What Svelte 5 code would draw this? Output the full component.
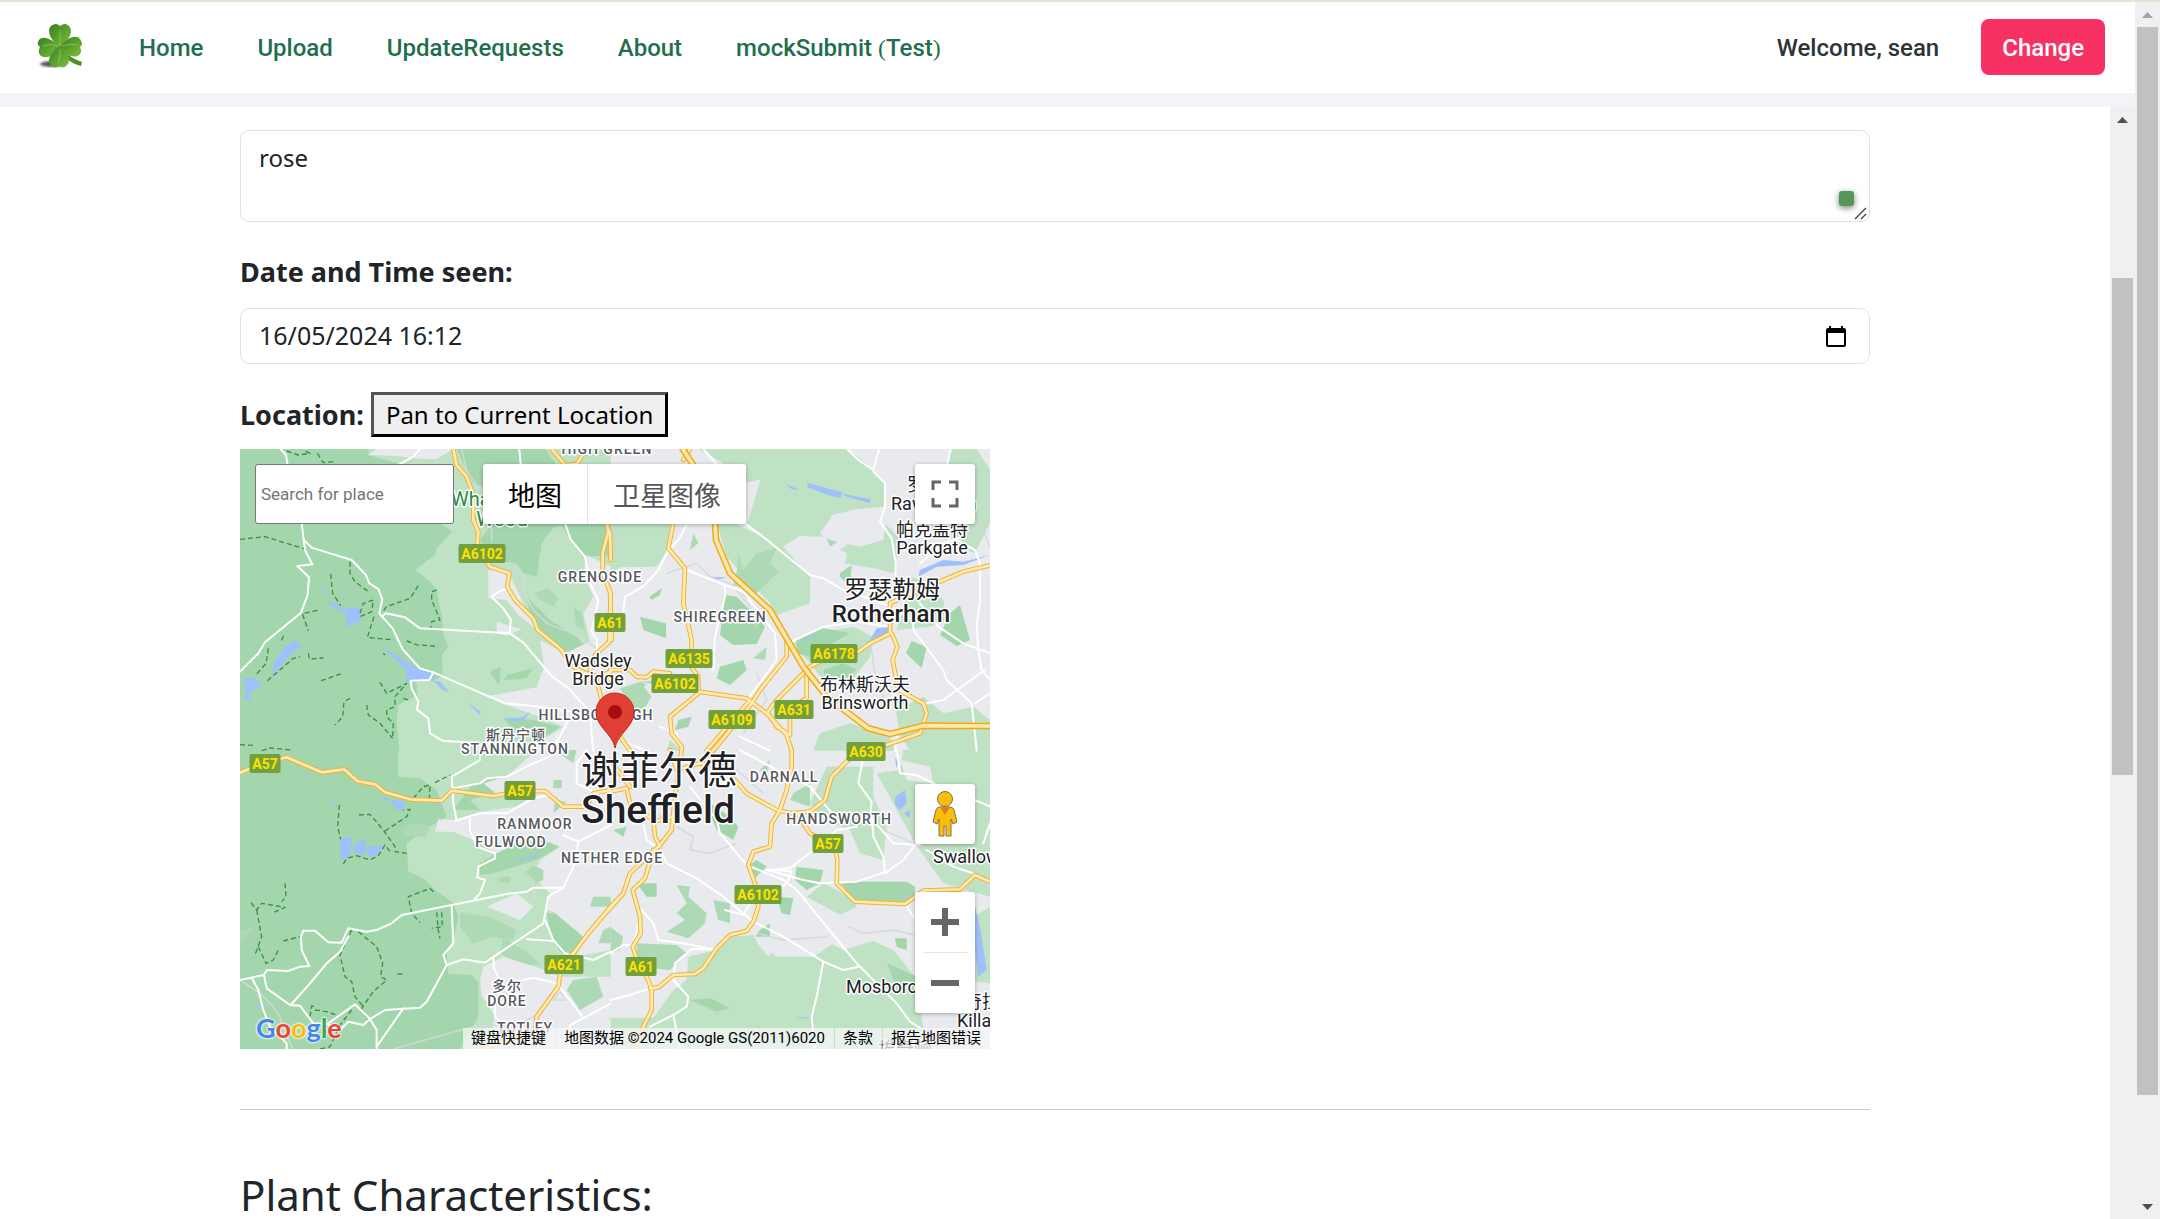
<script>
  const links = ['Home', 'Upload', 'UpdateRequests', 'About'];
  let plantName = $state('rose');
  let seenAt = $state('16/05/2024 16:12');
  let place = $state('');

  // The terrain is drawn in four tiles, each with its own origin.
  const tiles = [
    {
      x: 0, y: -27,
      light: ['0,27 1112,27 1112,932 0,932'],
      dark: [
        '0,27 385,27 385,45 480,72 560,72 640,150 560,200 560,250 600,250 637,275 590,325 585,345 525,390 570,425 590,450 605,530 612,590 626,620 606,645 608,706 585,720 530,725 532,765 475,795 470,840 478,932 0,932',
        '650,27 915,27 960,90 1112,80 1112,345 1040,350 985,290 965,255 940,262 905,310 890,410 850,400 830,370 795,365 750,355 720,300 755,255 755,150 700,130 665,60',
        '860,470 930,540 1010,590 1040,625 975,635 905,570 870,520',
        '760,690 782,680 778,735 750,700',
        '800,705 880,685 860,715 790,720',
        '790,835 880,840 960,860 900,900 830,880'
      ],
      mid: ['880,460 925,445 955,475 940,500 900,480', '1000,500 1025,515 1035,570 1010,560', '1035,740 1060,735 1075,780 1035,790'],
      grey: [
        '385,45 410,27 640,27 590,57 545,57 470,48',
        '1040,345 1112,380 1112,640 1050,605 1030,520 1060,470 1030,400',
        '900,600 975,640 1060,600 1112,620 1112,932 700,932 730,905 900,905 970,860 900,830 790,792 745,768 890,742 912,680',
        '745,390 805,395 850,490 890,570 830,520 800,480 745,475',
        '770,545 845,568 800,587 770,580'
      ],
      water: ['265,482 318,508 360,500 363,540 322,563 318,520 268,495', '165,600 185,618 150,645 97,710 100,670 130,625', '8,718 42,712 66,735 32,755 30,782 14,778 18,740', '413,612 490,660 540,690 582,700 580,722 500,725 498,690 450,645', '580,722 600,725 630,758 608,750', '680,786 722,815 718,824', '795,836 848,832 872,814 850,842 812,843', '248,435 256,470 246,455'],
      grey2: ['665,27 680,90 720,150 755,200 755,305', '800,370 830,385 850,410 850,455 880,510 920,550 1010,585 1070,625'],
      minor: ['122,27 138,45 150,120 185,250 195,330 217,373 172,378 207,412 203,465 183,518 75,607 55,640 0,695', '190,298 215,323 335,360 378,405 388,430 415,447 427,478 418,520 458,565 488,628 540,685 580,697 795,790 900,800 1000,815', '425,530 437,520 495,532 540,565 810,580 850,608 935,708 985,745 1050,815', '810,580 812,538 790,505 755,472 775,455 800,447', '838,27 842,70 900,160 975,250 992,298 1035,350 1050,430 1075,480 1055,575 1072,600 1070,640', '580,697 568,720 512,722 515,745 535,785 530,808 565,835 570,880 608,902 700,908', '480,72 520,50 540,27', '985,840 960,890 930,932', '1050,815 1055,880 1060,932'],
      road: ['640,27 650,75 680,110 700,165 700,240 715,275 712,320 750,380 808,400 802,440 825,480 880,535 893,570 960,625 1000,680 1065,715 1112,695', '935,27 975,75 1010,72 1040,27', '1100,240 1105,275 1088,340 1088,400 1112,460 1108,605 1065,645 1050,690', '1070,720 1085,780', '1040,700 1112,720'],
      big: [],
      trail: ['140,33 175,45 210,40 190,30', '232,40 250,68 280,65', '0,298 75,290 195,327', '330,365 330,400 345,425 390,458', '272,402 278,460 302,497', '232,511 187,521 205,573', '205,640 208,657 250,654', '130,587 125,603', '85,625 78,670 45,708', '82,722 160,655 180,650', '243,722 310,699', '535,437 510,475 440,500 425,520', '590,450 575,455 575,480 600,540 575,545 572,567', '360,520 370,490 400,480 395,515 360,530', '402,530 382,592 462,600', '430,640 435,645', '500,603 530,614 588,619', '330,775 312,785 308,830 285,855', '420,727 440,760 500,730 465,770 465,800 440,810 440,830 460,850 458,895', '380,795 385,825 420,850 458,895', '490,775 510,782', '0,914 40,916', '65,932 90,924 155,930']
    },
    {
      x: 1110, y: -27,
      light: ['265,27 715,27 790,90 825,130 822,200 740,208 665,225 660,265 635,290 570,288 515,322 455,300 455,280 410,260 430,190 452,118 400,130 340,70', '0,250 180,250 175,325 140,380 30,382 0,400', '320,250 375,250 455,290 520,320 600,410 600,490 500,525 480,490 350,350', '830,255 865,290 855,400 790,385 705,370 712,340 690,330 770,270', '1020,27 1100,27 1140,90 1140,250 1095,340 1040,320 990,240 1000,100', '905,410 950,430 1000,480 1010,540 960,560 860,570', '850,770 900,790 940,770 1000,820 1090,800 1140,840 1140,932 900,932 870,885', '610,932 630,880 720,850 840,890 855,932', '550,610 610,580 730,560 790,590 780,650 720,730 640,720', '180,900 215,932 170,932', '1010,830 1060,830 1050,860'],
      dark: ['90,530 168,550 168,595 100,570', '118,470 155,445 150,465 125,480', '740,230 775,240 750,260', '690,400 725,375 720,440 690,410', '345,465 380,470 430,520 465,560 440,612 370,615 330,585 335,545', '560,600 640,565 720,580 600,650 560,640', '1020,520 1050,495 1080,600 1040,618 990,585', '905,603 950,622 935,685 888,640', '180,720 150,735 90,725', '330,680 400,660 410,690 360,735 320,715', '205,840 245,830 235,860 195,870', '640,690 700,670 740,690 700,720 650,720', '90,725 110,735 60,750'],
      mid: ['385,340 400,390 440,340 500,325 480,370 505,395 440,460 370,435 380,400', '250,280 265,310 240,330', '650,295 690,300 660,320', '470,620 465,660 430,655', '30,745 90,725 125,770 100,810 60,800'],
      grey: ['735,210 800,205 825,250 820,300 750,320 660,300 630,280 665,230', '880,27 965,27 1000,70 960,95 900,60'],
      water: ['592,128 650,145 695,155 692,175 655,165 592,142', '690,160 782,178 780,190 715,172', '528,132 570,150 545,148', '780,600 800,565 840,560 830,590 750,610', '930,390 1000,360 1060,365 1140,345 1060,375 980,380 925,410', '560,608 620,580 600,595', '385,450 420,480 440,500 405,470', '300,410 350,412 320,420'],
      grey2: ['170,400 260,370 300,410 360,430 420,500 440,560', '1110,200 1140,160', '1090,270 1110,250 1140,320', '780,600 795,700 830,800', '440,700 470,780 400,880'],
      minor: ['280,27 320,72 320,90', '405,250 465,295 600,405 640,415 700,450 790,480 840,500 910,540 910,570 1000,690 1010,720 1085,790 1100,932', '712,27 745,60 790,90 808,27', '790,95 825,130 825,200 810,245 845,295 857,370 855,470', '1022,27 1012,72', '1040,300 1095,330 1110,370 1110,480 1100,560 1105,630 1115,690 1140,720', '230,255 205,300 175,330 145,390 100,440 45,470 40,515', '230,390 345,435 345,470 315,590 310,690', '345,435 400,455 495,580 500,660 390,810', '545,605 640,560 740,545 840,560', '930,490 985,560 1060,610 1140,640', '880,770 950,790 1000,780 1125,690', '1095,790 1140,760', '930,370 1000,310 1060,290', '0,890 110,932', '150,860 200,880 215,932', '390,890 480,932', '860,885 855,932'],
      road: ['190,250 175,325 225,385 220,490 245,600 243,680 265,710 265,760 180,830 185,880 215,920 215,932', '220,60 240,27', '0,275 2,360', '0,450 5,600', '530,590 530,650 450,750 425,790 310,932', '0,690 60,690 80,710 110,712 130,695 180,700', '265,755 410,775 430,790 470,820 530,885 545,932', '470,820 500,780 600,680 660,650 745,635 780,610 840,580 840,490 930,450 1060,395 1140,376', '590,690 590,775 510,820', '475,820 500,860 540,885 540,830', '845,580 862,620 848,660 865,750 940,790 950,820 930,880 830,915', '420,780 290,932', '60,932 30,890 0,870'],
      big: ['218,27 250,75 300,200 315,250 318,300 360,400 480,510 580,680 650,770 775,865 840,882 940,857 1140,858'],
      trail: []
    },
    {
      x: 0, y: 903,
      light: ['0,0 1112,0 1112,897 0,897'],
      dark: ['0,0 475,0 473,80 540,85 590,120 620,200 560,235 500,280 505,365 550,385 580,415 640,460 655,500 640,570 620,600 625,672 695,675 715,695 715,800 660,897 0,897', '640,180 700,100 790,80 830,110 690,150 720,180', '920,490 960,490 1030,560 1000,615 960,605 935,560', '1090,440 1112,440 1112,480 1050,470 1055,450', '720,340 800,290 900,270 960,290 890,330 760,370 720,375'],
      mid: ['660,490 750,500 830,540 820,570 760,560 700,580 660,530', '480,240 520,220 570,225 560,260 500,260', '790,560 850,600 900,640 860,650 780,610', '0,540 45,530 0,580', '780,380 815,380 805,400 775,395', '600,880 640,860'],
      grey: ['800,80 890,0 1112,0 1112,600 1010,620 1030,560 940,485 920,480 930,430 880,380 900,330 960,290 900,265 830,280 770,310 700,270 640,245 585,245 595,208 650,210 720,185 830,170 860,150 780,140 730,100', '730,650 790,620 900,655 960,680 1112,680 1112,897 740,897 765,800 725,735 720,690', '740,470 830,430 880,470 840,510'],
      grey3: ['940,90 965,90 965,115 940,115', '945,150 980,155 940,190', '1060,440 1112,440 1112,470 1050,470', '1090,540 1112,530 1112,580 1075,580', '1000,690 1070,680 1090,740 1020,780 980,720', '880,345 910,360 910,390 890,400 855,365', '945,0 1010,0 1000,40'],
      water: ['300,265 335,262 330,325 300,328', '337,290 375,264 378,315 345,310', '380,288 432,287 410,317 385,320', '420,140 445,145 440,155', '448,150 490,152 495,180 470,180', '265,152 300,166 270,160', '580,170 605,152 590,168', '825,330 880,318 900,295 885,322 830,332', '33,765 92,770 50,772'],
      grey2: ['0,690 60,730 100,770 120,800 125,830 160,897', '460,897 700,830 840,820 890,795', '940,750 960,725 975,750 940,750'],
      minor: ['0,690 72,675 80,660 145,663 180,650 208,648 185,600 183,560 190,542 225,542 265,577 305,578 325,535 380,545 410,540 455,520 485,495 635,465 800,432 860,425 880,413 970,413 1000,350 1015,275 1112,225', '72,675 80,715 150,765 180,767 220,820 262,822 345,763 390,807 410,840 410,897', '152,765 210,700 260,640 300,605 325,560', '35,683 55,720 70,780 90,830 140,880 140,897', '390,807 435,780 540,773 560,755 620,645 610,615 640,580 635,470', '620,645 670,628 735,638 910,520 925,440 970,413', '650,212 640,160 635,80 720,30 720,0', '640,115 720,100 740,85 800,80 860,50 970,0', '645,212 720,190 800,190 880,145 930,135', '690,205 690,240 710,290 765,310 765,325 715,350 712,382 735,390 720,430 700,452', '915,510 940,570 975,610 1060,630 1112,605', '860,568 940,573', '760,625 762,655 780,690 765,730 765,800 780,815', '850,690 880,683 950,700 990,750 1030,805 1112,760', '410,890 490,775', '262,822 300,840 325,815 370,825 390,807', '1030,805 990,825 990,897', '970,255 1015,275', '1040,0 1010,40 1010,100 1070,130'],
      road: ['0,68 70,40 140,22 245,67 312,58 352,93 405,103 435,127 510,148 605,152 635,122 760,138 830,125 915,123 970,170 1040,170 1060,130 1112,120', '1112,470 1140,440 1045,550 1000,610 965,640 955,710 890,800 885,840 830,860 730,897', '1112,470 1045,550'],
      big: [],
      trail: ['520,145 550,110 570,105 568,150', '585,98 630,75', '298,165 293,230 302,268', '357,195 390,193 430,240 465,290 465,305 500,310', '435,243 500,200 510,178 490,180', '310,342 320,325 350,317 390,330 415,317 435,285 450,305', '135,400 138,440 125,455', '33,458 50,480 65,460 135,472 100,488', '50,480 65,560 45,615', '55,590 78,640 100,630 115,600', '130,573 180,560', '580,425 570,415 505,440 515,490 540,517', '590,487 595,540 600,565', '605,487 607,530 575,535', '335,540 300,615 315,680 335,695 345,740 370,770', '355,545 410,590 428,640 422,680 440,690 400,725 365,775 385,810', '472,672 490,672', '210,800 215,768 230,770', '225,780 260,785 290,795', '335,780 300,825 270,890 240,897']
    },
    {
      x: 1110, y: 903,
      light: ['0,803 130,803 190,720 230,690 235,620 320,600 350,560 430,555 500,620 610,620 700,560 750,555 850,600 915,680 950,897 0,897', '880,0 1140,0 1140,440 1000,400 915,280 850,160 800,70 870,60', '650,50 790,50 790,140 830,230 820,330 750,310 720,240 640,210 600,160', '590,440 640,400 720,440 740,470 690,495', '1040,530 1140,470 1140,700 1060,690'],
      dark: ['690,395 890,395 915,410 915,450 880,460 730,450', '285,150 360,200 385,230 370,270 320,240', '560,350 640,360 630,400 590,420 555,390', '500,440 550,445 540,495 515,490', '410,350 440,330 470,350 430,390', '10,240 50,230 40,260', '80,400 140,400 140,440 110,440', '450,540 480,520 480,570 430,570', '855,565 890,565 890,600 860,590', '240,750 300,745 360,775 320,785', '830,640 920,680 920,740 860,710'],
      mid: ['200,405 240,410 235,440 290,490 285,520 235,565 170,545 225,510 200,490 230,460', '310,450 360,460 360,520 325,510', '80,580 200,585 230,610 180,660 80,650', '0,530 40,560 30,600 0,610', '150,620 190,610 170,650', '450,60 480,30 470,80', '550,130 600,100 600,170 540,150'],
      grey: ['430,560 500,560 500,590 475,620 450,590', '640,570 760,540 830,560 700,600', '870,30 960,50 970,100 890,90'],
      water: ['855,140 885,120 890,160 870,180 855,165', '1095,470 1110,530 1130,660 1105,680 1095,600', '880,190 900,180 900,205', '855,25 865,30 860,55', '560,802 610,802 570,806'],
      grey2: ['200,230 250,260 240,300 300,310 380,280', '200,20 320,30 370,50 460,130', '715,530 760,550 850,540 915,555', '820,240 1000,320 1140,410', '120,180 180,215', '440,550 520,570 650,560'],
      minor: ['240,110 320,210 330,250 410,345 520,390 560,420 740,640 860,760 900,815 940,840 980,897', '390,0 500,60 600,110 690,220', '470,360 540,355 610,300 680,240 740,230', '470,360 580,390 630,400 740,395 830,365', '60,340 150,300 170,340 260,385 340,440 430,515 520,560 640,635 700,660 745,650', '500,360 545,365 530,400 500,420', '760,20 745,100 785,155 780,200 850,280 930,285', '785,200 790,260 820,320 825,370 880,330 915,285', '860,0 870,70 920,75 980,105', '1095,150 1140,170', '950,300 1030,350 1090,370', '885,460 910,500', '640,635 620,740 605,800 615,897', '0,610 40,585 70,585', '70,585 95,480 130,520 145,570 220,580 320,600', '320,598 245,597 195,640 190,690 235,740 230,770 190,795 120,830', '190,795 210,897', '0,750 60,735 120,715', '345,480 400,495 420,460', '1140,220 1120,280', '100,220 110,270 150,300'],
      road: ['545,0 545,50 530,120 510,180 485,220 480,290 430,305 415,345 435,400 445,470 430,515 410,543 360,555 320,595 280,655 255,672 190,675 145,712 120,715', '340,50 410,130 500,180 545,190 600,185 645,150 665,80 715,30', '560,190 600,250 640,270', '675,290 682,330 680,400 735,455 885,462 940,422 1050,418 1095,375 1140,395', '0,475 40,430 60,370 150,285 185,240 195,140 215,0', '130,300 105,385 68,420 90,500 92,550 68,590 85,640 115,690 125,720 125,780 100,830 75,897', '0,125 50,115 60,160 130,210 135,260 150,290', '130,215 190,200', '0,30 60,110', '180,0 200,60 270,40 340,50', '270,40 310,0'],
      big: [],
      trail: []
    }
  ];

  const fills = ['light', 'dark', 'mid', 'grey', 'grey3', 'water'];

  const labels = [
    { t: 'HIGH GREEN', x: 367, y: 5, k: 'area' },
    { t: 'Wharncliffe', x: 211, y: 57, k: 'wood start' },
    { t: 'Wood', x: 262, y: 77, k: 'wood' },
    { t: 'GRENOSIDE', x: 360, y: 133, k: 'area' },
    { t: 'SHIREGREEN', x: 480, y: 173, k: 'area' },
    { t: 'Wadsley', x: 358, y: 218, k: 'town' },
    { t: 'Bridge', x: 358, y: 236, k: 'town' },
    { t: 'HILLSBOROUGH', x: 356, y: 271, k: 'area' },
    { t: '斯丹宁顿', x: 276, y: 291, k: 'area' },
    { t: 'STANNINGTON', x: 275, y: 305, k: 'area' },
    { t: 'RANMOOR', x: 295, y: 380, k: 'area' },
    { t: 'FULWOOD', x: 271, y: 398, k: 'area' },
    { t: 'NETHER EDGE', x: 372, y: 414, k: 'area' },
    { t: 'DARNALL', x: 544, y: 333, k: 'area' },
    { t: 'HANDSWORTH', x: 599, y: 375, k: 'area' },
    { t: '多尔', x: 267, y: 542, k: 'area' },
    { t: 'DORE', x: 267, y: 557, k: 'area' },
    { t: 'TOTLEY', x: 285, y: 584, k: 'area' },
    { t: '罗马什', x: 667, y: 42, k: 'town start' },
    { t: 'Rawmarsh', x: 651, y: 61, k: 'town start' },
    { t: '帕克盖特', x: 692, y: 87, k: 'town' },
    { t: 'Parkgate', x: 692, y: 105, k: 'town' },
    { t: '罗瑟勒姆', x: 652, y: 149, k: 'large' },
    { t: 'Rotherham', x: 651, y: 173, k: 'large strong' },
    { t: '布林斯沃夫', x: 625, y: 242, k: 'town' },
    { t: 'Brinsworth', x: 625, y: 260, k: 'town' },
    { t: 'Swallownest', x: 693, y: 414, k: 'town start' },
    { t: 'Mosborough', x: 606, y: 544, k: 'town start' },
    { t: '奇拉马什', x: 724, y: 559, k: 'town start' },
    { t: 'Killamarsh', x: 717, y: 578, k: 'town start' },
    { t: '埃奇顿', x: 665, y: 606, k: 'town' },
    { t: '谢菲尔德', x: 419, y: 335, k: 'city' },
    { t: 'Sheffield', x: 418, y: 374, k: 'city strong' }
  ];

  const shields = [
    { t: 'A6102', x: 242, y: 95 }, { t: 'A61', x: 370, y: 164 }, { t: 'A6135', x: 449, y: 200 },
    { t: 'A6102', x: 435, y: 225 }, { t: 'A6178', x: 594, y: 195 }, { t: 'A631', x: 554, y: 251 },
    { t: 'A6109', x: 492, y: 261 }, { t: 'A630', x: 626, y: 293 }, { t: 'A57', x: 25, y: 305 },
    { t: 'A57', x: 280, y: 332 }, { t: 'A57', x: 588, y: 385 }, { t: 'A6102', x: 518, y: 436 },
    { t: 'A61', x: 401, y: 508 }, { t: 'A621', x: 324, y: 506 }
  ];
  const shieldWidth = (t) => 7 + t.length * 8;
</script>

{#snippet lines(key, cls)}
  {#each tiles as tile}
    <g transform="translate({tile.x} {tile.y})">
      {#each tile[key] as points}
        <polyline class={cls} {points} />
      {/each}
    </g>
  {/each}
{/snippet}

<div class="page">
  <div class="window">
    <header>
      <a class="brand" href="#home" aria-label="Plants home">
        <svg viewBox="0 0 64 64" width="64" height="64" aria-hidden="true">
          <defs>
            <linearGradient id="leaf" x1="0" y1="0" x2="1" y2="1">
              <stop offset="0" stop-color="#3b7f22" />
              <stop offset="1" stop-color="#7cc03c" />
            </linearGradient>
            <filter id="soft"><feGaussianBlur stdDeviation="1" /></filter>
          </defs>
          <ellipse cx="22" cy="49" rx="12" ry="3" fill="#222" opacity=".75" filter="url(#soft)" />
          <path d="M30 31C36 39 43 44 52 47L51 51C42 49 34 43 28 33Z" fill="#4c9427" />
          <path d="M30 32C21 26 16 16 21 11Q26 7 30 11Q35 7 39 11C44 16 39 26 30 32Z" fill="url(#leaf)" />
          <path d="M30 32C22 24 13 20 9 25Q6 29 10 32Q7 38 11 41C18 45 25 39 30 32Z" fill="url(#leaf)" />
          <path d="M30 32C36 23 46 19 50 24Q54 29 50 32Q53 38 48 41C41 43 34 39 30 32Z" fill="url(#leaf)" />
          <path d="M30 31C21 36 16 46 21 50Q25 54 29 51Q34 54 37 50C42 45 37 37 30 31Z" fill="url(#leaf)" />
          <path d="M30 30V15M28 31Q20 28 13 31M32 31Q40 28 47 30M30 34Q31 43 28 48" fill="none" stroke="#9bd25c" stroke-width="1" opacity=".7" />
        </svg>
      </a>
      <nav>
        {#each links as link}
          <a href="#{link}">{link}</a>
        {/each}
        <a href="#test">mockSubmit <span class="paren">(</span>Test<span class="paren">)</span></a>
      </nav>
      <div class="account">
        <span>Welcome, sean</span>
        <button type="button" class="change">Change</button>
      </div>
    </header>

    <div class="body">
      <main>
        <div class="field">
          <textarea aria-label="Plant name" bind:value={plantName}></textarea>
          <span class="checker"></span>
          <svg class="grip" viewBox="0 0 14 14" width="14" height="14" aria-hidden="true">
            <path d="M1 12L12 1M7 12L12 7" stroke="#444" stroke-width="1.4" fill="none" />
          </svg>
        </div>

        <label class="title" for="seen">Date and Time seen:</label>
        <div class="field date">
          <input id="seen" type="text" bind:value={seenAt} />
          <button type="button" aria-label="Open calendar">
            <svg viewBox="0 0 20 21" width="20" height="21"><path fill="#000" fill-rule="evenodd" d="M3 0H5V2H15V0H17V2H18Q20 2 20 4V19Q20 21 18 21H2Q0 21 0 19V4Q0 2 2 2H3ZM2 7V19H18V7Z" /></svg>
          </button>
        </div>

        <div class="location">
          <span class="title">Location:</span>
          <button type="button" class="pan">Pan to Current Location</button>
        </div>

        <section class="map" aria-label="Map">
          <svg class="terrain" viewBox="0 0 2250 1800" aria-hidden="true">
            <rect width="2250" height="1800" fill="#e8eaed" />
            {#each fills as fill}
              {#each tiles as tile}
                <g transform="translate({tile.x} {tile.y})">
                  {#each tile[fill] ?? [] as points}
                    <polygon class={fill} {points} />
                  {/each}
                </g>
              {/each}
            {/each}
            {@render lines('grey2', 'rail')}
            {@render lines('trail', 'trail')}
            {@render lines('minor', 'minor')}
            {@render lines('road', 'road-edge')}
            {@render lines('road', 'road')}
            {@render lines('big', 'big-edge')}
            {@render lines('big', 'big')}
          </svg>
          <svg class="terrain names" viewBox="0 0 750 600">
            {#each labels as l}
              <text x={l.x} y={l.y} class={l.k}>{l.t}</text>
            {/each}
            {#each shields as s}
              <rect x={s.x - shieldWidth(s.t) / 2} y={s.y} width={shieldWidth(s.t)} height="19" rx="2" fill="#71a03c" />
              <text x={s.x} y={s.y + 15} class="shield">{s.t}</text>
            {/each}
            <path d="M375 299C373 285 356 278 356 263A19 19 0 0 1 394 263C394 278 377 285 375 299Z" fill="#e04034" stroke="#c5221f" stroke-width="1" />
            <circle cx="375" cy="263" r="7" fill="#a50e0e" />
          </svg>

          <input class="search" type="text" placeholder="Search for place" aria-label="Search for place" bind:value={place} />
          <div class="types">
            <button type="button" class="on">地图</button>
            <button type="button">卫星图像</button>
          </div>
          <button type="button" class="tool full" aria-label="Full screen">
            <svg viewBox="0 0 28 28" width="28" height="28"><path d="M2 10V2H10M18 2H26V10M26 18V26H18M10 26H2V18" fill="none" stroke="#666" stroke-width="3" /></svg>
          </button>
          <button type="button" class="tool pegman" aria-label="Street View">
            <svg viewBox="0 0 26 46" width="26" height="46">
              <g fill="#f9bd0a" stroke="#7a7250" stroke-width="1">
                <path d="M8 16H18Q21 16 22 19L25 31L21 33L19 28V45H14V35H12V45H7V28L5 33L1 31L4 19Q5 16 8 16Z" />
                <circle cx="13" cy="8" r="7.5" />
              </g>
              <path d="M8 16Q13 18 18 16L13 24Z" fill="#e07b1a" />
            </svg>
          </button>
          <div class="zoom">
            <button type="button" aria-label="Zoom in">
              <svg viewBox="0 0 28 28" width="28" height="28"><path d="M0 14H28M14 0V28" stroke="#666" stroke-width="6" /></svg>
            </button>
            <span class="rule"></span>
            <button type="button" aria-label="Zoom out">
              <svg viewBox="0 0 28 28" width="28" height="28"><path d="M0 14H28" stroke="#666" stroke-width="6" /></svg>
            </button>
          </div>
          <a class="logo" href="#google" aria-label="Google"><span class="b">G</span><span class="r">o</span><span class="y">o</span><span class="b">g</span><span class="g">l</span><span class="r">e</span></a>
          <div class="credits">
            <button type="button">键盘快捷键</button>
            <span>地图数据 ©2024 Google GS(2011)6020</span>
            <a href="#terms">条款</a>
            <a href="#report">报告地图错误</a>
          </div>
        </section>

        <hr />
        <h2>Plant Characteristics:</h2>
      </main>
      <div class="bar inner" aria-hidden="true">
        <svg viewBox="0 0 25 25" width="25" height="25"><path d="M7 16L12.500 10L18 16Z" fill="#505050" /></svg>
        <span class="before"></span>
        <span class="thumb"></span>
        <span class="after"></span>
      </div>
    </div>
  </div>
  <div class="bar outer" aria-hidden="true">
    <svg viewBox="0 0 25 25" width="25" height="25"><path d="M7 16L12.500 10L18 16Z" fill="#a3a3a3" /></svg>
    <span class="thumb"></span>
    <span class="after"></span>
    <svg viewBox="0 0 25 25" width="25" height="25"><path d="M7 10L12.500 16L18 10Z" fill="#505050" /></svg>
  </div>
</div>

<style>
  :global(body) { background: #fff; overflow: hidden; }
  * { box-sizing: border-box; }
  button, input, textarea { font: inherit; margin: 0; }
  button { cursor: pointer; }
  svg { display: block; }

  .page {
    display: flex;
    height: 100vh;
    border-top: 2px solid #e6e4d4;
    font-family: "Noto Sans", "Noto Sans CJK SC", sans-serif;
    font-size: 25px;
    color: #212529;
  }
  .window { flex: 1; min-width: 0; display: flex; flex-direction: column; }

  header {
    display: flex;
    align-items: center;
    flex: none;
    padding: 17px 30px 18px;
    border-bottom: 14px solid #f3f3f9;
    font: 500 24px/28px Roboto, sans-serif;
  }
  .brand { margin: -4px 45px -4px 0; }
  nav { display: flex; gap: 54px; padding-top: 2px; }
  nav a { color: #1f6f4f; text-decoration: none; white-space: nowrap; }
  .paren { font-family: "Liberation Serif", serif; font-weight: 400; }
  .account { margin-left: auto; display: flex; align-items: center; gap: 42px; color: #2d3436; }
  .account span { padding-top: 2px; }
  .change {
    height: 56px;
    padding: 2px 21px 0;
    border: 0;
    border-radius: 8px;
    background: #f73164;
    color: #fff;
  }

  .body { flex: 1; min-height: 0; display: flex; }
  main { flex: 1; min-width: 0; padding: 23px 240px 0; overflow: hidden; }

  .field { position: relative; }
  textarea, .date {
    display: block;
    width: 100%;
    border: 1px solid #dee2e6;
    border-radius: 9px;
    background: #fff;
    color: #212529;
  }
  textarea { height: 92px; padding: 8px 18px; line-height: 38px; font-size: 24px; resize: none; outline: 0; }
  .checker {
    position: absolute;
    right: 16px;
    bottom: 16px;
    width: 15px;
    height: 15px;
    border-radius: 3px;
    background: #549756;
    box-shadow: 0 2px 6px rgba(0, 0, 0, .5);
  }
  .grip { position: absolute; right: 2px; bottom: 1px; }

  .title { font-size: 27px; line-height: 42px; font-weight: 700; }
  label.title { display: block; margin: 29px 0 15px; }
  .date { display: flex; align-items: center; height: 56px; padding: 0 23px 0 18px; }
  .date input { flex: 1; min-width: 0; padding: 0 0 2px; border: 0; outline: 0; background: none; color: inherit; }
  .date button { padding: 0; border: 0; background: none; }

  .location { display: flex; align-items: center; gap: 7px; margin: 28px 0 12px; }
  .pan {
    height: 45px;
    padding: 0 12px;
    border: 3px outset #000;
    background: #efefef;
    color: #000;
    font-size: 24px;
    line-height: 37px;
  }

  .map {
    position: relative;
    width: 750px;
    max-width: 100%;
    height: 600px;
    overflow: hidden;
    background: #e8eaed;
    font-family: Roboto, "Noto Sans CJK SC", sans-serif;
  }
  .terrain { position: absolute; left: 0; top: 0; width: 750px; height: 600px; }
  .light { fill: #bfe2c5; }
  .dark { fill: #a3d6ac; }
  .mid { fill: #addab4; }
  .grey { fill: #e8eaed; }
  .grey3 { fill: #addab4; }
  .water { fill: #9fc0fb; }
  polyline { fill: none; stroke-linejoin: round; stroke-linecap: round; }
  .rail { stroke: #d5d8dc; stroke-width: 4; }
  .trail { stroke: #36923f; stroke-width: 4; stroke-dasharray: 15 9; stroke-linecap: butt; }
  .minor { stroke: #fff; stroke-width: 6; }
  .road-edge { stroke: #f0b332; stroke-width: 14; }
  .road { stroke: #fdeab2; stroke-width: 8; }
  .big-edge { stroke: #f0ab14; stroke-width: 20; }
  .big { stroke: #fde7ad; stroke-width: 11; }

  text { text-anchor: middle; paint-order: stroke; stroke: #fff; stroke-width: 3px; stroke-linejoin: round; fill: #202124; }
  .start { text-anchor: start; }
  .area { font-size: 14px; font-weight: 500; letter-spacing: 1px; fill: #55585d; }
  .wood { font-size: 20px; fill: #2b8a3e; }
  .town { font-size: 18px; }
  .large { font-size: 24px; }
  .city { font-size: 39px; }
  .strong { font-weight: 500; }
  .shield { font-size: 14px; font-weight: 700; fill: #ffe100; stroke: none; }

  .search {
    position: absolute;
    left: 15px;
    top: 15px;
    width: 199px;
    height: 60px;
    padding: 0 5px;
    border: 1px solid #767676;
    border-radius: 3px;
    background: #fff;
    font-size: 17px;
  }
  .search::placeholder { color: #757575; }
  .types, .tool, .zoom {
    position: absolute;
    border: 0;
    border-radius: 3px;
    background: #fff;
    box-shadow: 0 1px 4px rgba(0, 0, 0, .3);
  }
  .types { left: 243px; top: 15px; display: flex; height: 60px; }
  .types button { padding: 0 25px; border: 0; background: none; color: #565656; font-size: 27px; white-space: nowrap; }
  .types .on { color: #000; border-right: 1px solid #e6e6e6; }
  .tool { right: 15px; width: 60px; height: 60px; padding: 0; display: grid; place-items: center; }
  .full { top: 15px; }
  .pegman { top: 335px; }
  .zoom { right: 15px; top: 443px; width: 60px; display: flex; flex-direction: column; align-items: center; }
  .zoom button { width: 60px; height: 60px; padding: 0; border: 0; background: none; display: grid; place-items: center; }
  .rule { width: 45px; height: 1px; background: #e6e6e6; }

  .logo {
    position: absolute;
    left: 16px;
    bottom: 3px;
    font: 700 27px/36px Lato, sans-serif;
    text-decoration: none;
    text-shadow: 0 0 2px #fff, 0 0 2px #fff, 0 0 3px #fff;
  }
  .b { color: #4285f4; }
  .r { color: #ea4335; }
  .y { color: #fbbc05; }
  .g { color: #34a853; }

  .credits {
    position: absolute;
    right: 0;
    bottom: 0;
    display: flex;
    height: 21px;
    font-size: 15px;
    line-height: 21px;
    white-space: nowrap;
  }
  .credits > * {
    padding: 0 9px 0 8px;
    border: 0;
    background: rgba(245, 245, 245, .75);
    color: #000;
    text-decoration: none;
    line-height: 21px;
  }
  .credits > * + * { margin-left: 1px; }

  hr { height: 1px; margin: 60px 0 58px; border: 0; background: #c7c8c9; }
  h2 { margin: 0; font-size: 42px; font-weight: 400; line-height: 53px; white-space: nowrap; }

  .bar { flex: none; width: 25px; display: flex; flex-direction: column; background: #f0f0f0; }
  .bar svg { flex: none; }
  .thumb { margin: 0 2px; background: #c1c1c1; }
  .outer .thumb { flex: 1068; }
  .outer .after { flex: 99; }
  .inner .before { flex: 146; }
  .inner .thumb { flex: 497; }
  .inner .after { flex: 444; }
</style>
